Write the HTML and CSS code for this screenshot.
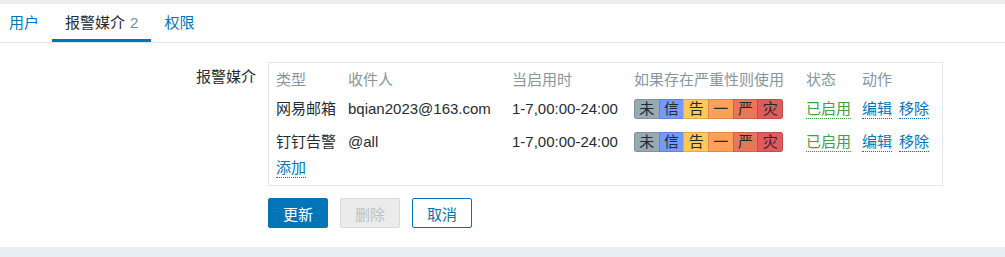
FILE: index.html
```html
<!DOCTYPE html>
<html lang="zh-CN">
<head>
    <meta charset="UTF-8">
    <meta name="viewport" content="width=device-width, initial-scale=1.0">
    <title>用户 - 报警媒介</title>
    <link rel="stylesheet" href="styles.css">
</head>
<body>
    <div class="page">
        <ul class="tabs">
            <li><a href="#">用户</a></li>
            <li class="active"><a href="#">报警媒介<span class="count">2</span></a></li>
            <li><a href="#">权限</a></li>
        </ul>

        <div class="form">
            <div class="form-row">
                <label class="form-label">报警媒介</label>
                <div class="media-box">
                    <table class="media-list">
                        <colgroup>
                            <col class="c-type">
                            <col class="c-to">
                            <col class="c-when">
                            <col class="c-sev">
                            <col class="c-status">
                            <col>
                        </colgroup>
                        <thead>
                            <tr>
                                <th>类型</th>
                                <th>收件人</th>
                                <th>当启用时</th>
                                <th>如果存在严重性则使用</th>
                                <th>状态</th>
                                <th>动作</th>
                            </tr>
                        </thead>
                        <tbody>
                            <tr>
                                <td>网易邮箱</td>
                                <td>bqian2023@163.com</td>
                                <td>1-7,00:00-24:00</td>
                                <td>
                                    <div class="sev">
                                        <span class="s-na">未</span><span class="s-info">信</span><span class="s-warn">告</span><span class="s-avg">一</span><span class="s-high">严</span><span class="s-dis">灾</span>
                                    </div>
                                </td>
                                <td><a href="#" class="link green">已启用</a></td>
                                <td><a href="#" class="link">编辑</a><a href="#" class="link">移除</a></td>
                            </tr>
                            <tr>
                                <td>钉钉告警</td>
                                <td>@all</td>
                                <td>1-7,00:00-24:00</td>
                                <td>
                                    <div class="sev">
                                        <span class="s-na">未</span><span class="s-info">信</span><span class="s-warn">告</span><span class="s-avg">一</span><span class="s-high">严</span><span class="s-dis">灾</span>
                                    </div>
                                </td>
                                <td><a href="#" class="link green">已启用</a></td>
                                <td><a href="#" class="link">编辑</a><a href="#" class="link">移除</a></td>
                            </tr>
                            <tr class="add-row">
                                <td colspan="6"><a href="#" class="link">添加</a></td>
                            </tr>
                        </tbody>
                    </table>
                </div>
            </div>

            <div class="form-actions">
                <button class="btn btn-primary">更新</button>
                <button class="btn btn-disabled" disabled>删除</button>
                <button class="btn btn-alt">取消</button>
            </div>
        </div>
    </div>
</body>
</html>
```

FILE: styles.css
```css
html, body {
    margin: 0;
    padding: 0;
}
body {
    background-color: #ebeef0;
    font-family: "Liberation Sans", "Noto Sans CJK SC", sans-serif;
    font-size: 15px;
    color: #1f2c33;
    height: 257px;
    overflow: hidden;
}
a {
    text-decoration: none;
    color: #0275b8;
}
.page {
    margin-top: 4px;
    background-color: #fff;
    padding-bottom: 19px;
}

/* tabs */
.tabs {
    list-style: none;
    margin: 0;
    padding: 0;
    display: flex;
    border-bottom: 1px solid #dfe4e7;
}
.tabs li {
    padding: 2px 13px 0 13px;
    line-height: 33px;
    border-bottom: 3px solid transparent;
}
.tabs li:first-child {
    padding-left: 9px;
}
.tabs li.active {
    border-bottom-color: #0275b8;
}
.tabs li.active a {
    color: #1f2c33;
}
.count {
    color: #768d99;
    margin-left: 5px;
}

/* form */
.form {
    padding-top: 19px;
}
.form-row {
    display: grid;
    grid-template-columns: 256px 675px;
    column-gap: 12px;
    align-items: start;
}
.form-label {
    text-align: right;
    line-height: 30px;
}
.media-box {
    border: 1px solid #e4e8ea;
    padding: 5px 0 7px 7px;
}
.media-list {
    border-collapse: collapse;
    table-layout: fixed;
    width: 666px;
}
.c-type { width: 72px; }
.c-to { width: 164px; }
.c-when { width: 122px; }
.c-sev { width: 172px; }
.c-status { width: 56px; }
.media-list th,
.media-list td {
    padding: 0;
    text-align: left;
    white-space: nowrap;
    vertical-align: middle;
}
.media-list th {
    font-weight: normal;
    color: #8796a0;
    height: 24px;
    line-height: 24px;
}
.media-list td {
    height: 33px;
    line-height: 20px;
}
.media-list .add-row td {
    height: 20px;
}
.link {
    border-bottom: 1px dotted #0275b8;
    padding-bottom: 1px;
    margin-right: 7px;
}
.link.green {
    color: #429e47;
    border-bottom-color: #429e47;
}

/* severity cells */
.sev {
    display: flex;
    width: 149px;
    height: 20px;
    border-radius: 2px;
    overflow: hidden;
}
.sev span {
    flex: 1;
    text-align: center;
    line-height: 18px;
    border: 1px solid rgba(0, 0, 0, 0.14);
    border-right: none;
    color: #1f2c33;
}
.sev span:first-child {
    border-radius: 2px 0 0 2px;
}
.sev span:last-child {
    border-right: 1px solid rgba(0, 0, 0, 0.14);
    border-radius: 0 2px 2px 0;
}
.s-na { background-color: #97aab3; }
.s-info { background-color: #7499ff; }
.s-warn { background-color: #ffc859; }
.s-avg { background-color: #ffa059; }
.s-high { background-color: #e97659; }
.s-dis { background-color: #e45959; }

/* buttons */
.form-actions {
    margin-top: 12px;
    padding-left: 268px;
    display: flex;
    gap: 12px;
}
.btn {
    width: 60px;
    height: 30px;
    font-family: inherit;
    font-size: 15px;
    border-radius: 2px;
    border: 1px solid #0275b8;
    padding: 0;
    cursor: pointer;
}
.btn-primary {
    background-color: #0275b8;
    color: #fff;
}
.btn-disabled {
    background-color: #ebebeb;
    border-color: #d6dadc;
    color: #bcc2c5;
}
.btn-alt {
    background-color: #fff;
    color: #0275b8;
}
```
